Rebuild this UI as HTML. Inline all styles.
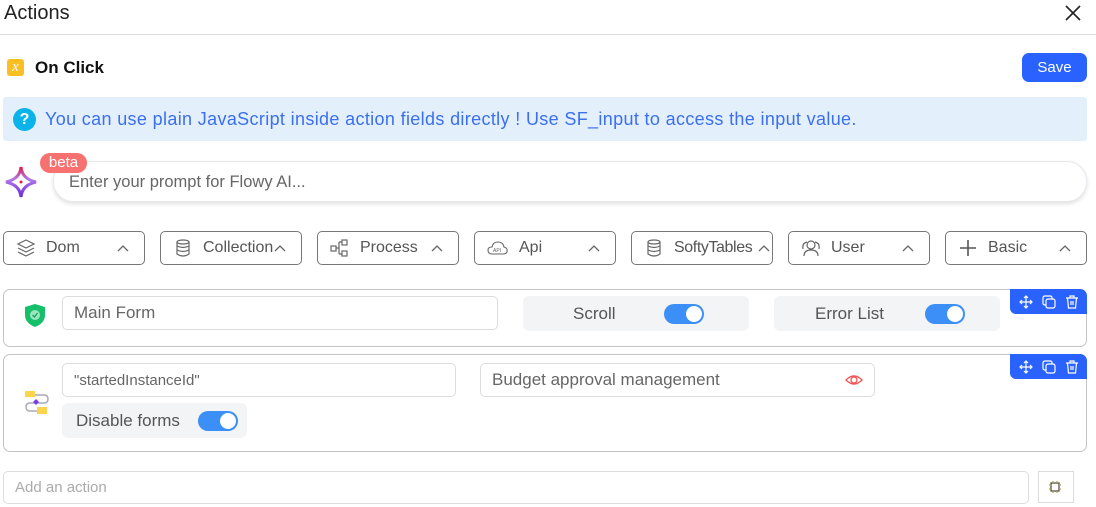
<!DOCTYPE html>
<html><head><meta charset="utf-8"><style>
*{box-sizing:border-box;margin:0;padding:0}
body{width:1096px;height:507px;background:#fff;font-family:"Liberation Sans",sans-serif;position:relative;overflow:hidden;color:#333}
.a{position:absolute}
.btn{position:absolute;top:231px;width:142px;height:34px;border:1px solid #777;border-radius:5px;font-size:16px;color:#555;display:flex;align-items:center;padding-left:12px}
.btn svg.i{margin-right:10px}
.btn .car{position:absolute;right:14px;top:9px}
.card{position:absolute;left:3px;width:1084px;border:1px solid #c4c4c4;border-radius:7px}
.inp{position:absolute;border:1px solid #ddd;border-radius:5px;font-size:17px;color:#666;padding-left:11px;display:flex;align-items:center}
.tg{position:absolute;background:#f3f4f6;border-radius:6px;font-size:17px;color:#555;display:flex;align-items:center}
.sw{width:40px;height:20px;border-radius:10px;background:#3b8ff6;position:absolute}
.sw:after{content:"";position:absolute;right:2px;top:2px;width:16px;height:16px;border-radius:50%;background:#fff}
.tools{position:absolute;right:-1px;top:-1px;width:77px;height:25px;background:#2962ff;border-radius:0 7px 0 6px;display:flex;justify-content:space-around;align-items:center;padding:0 4px}
</style></head><body>
<div class="a" style="left:4px;top:2px;font-size:20px;color:#222">Actions</div>
<svg class="a" style="left:1065px;top:5px" width="16" height="16"><path d="M1 1L15 15M15 1L1 15" stroke="#222" stroke-width="1.6"/></svg>
<div class="a" style="left:0;top:34px;width:1096px;height:1px;background:#ddd"></div>
<div class="a" style="left:7px;top:59px;width:17px;height:17px;background:#fbbf24;border-radius:3px;color:#fff;font-family:'Liberation Serif',serif;font-style:italic;font-size:15px;text-align:center;line-height:16px">x</div>
<div class="a" style="left:35px;top:58px;font-size:17px;font-weight:bold;color:#111">On Click</div>
<div class="a" style="left:1022px;top:53px;width:65px;height:29px;background:#2962ff;border-radius:7px;color:#fff;font-size:15px;text-align:center;line-height:29px">Save</div>
<div class="a" style="left:3px;top:97px;width:1084px;height:44px;background:#e3f0fb;border-radius:3px"></div>
<div class="a" style="left:13px;top:108px;width:23px;height:23px;border-radius:50%;background:#0ab3e8;color:#fff;font-weight:bold;font-size:16px;text-align:center;line-height:23px">?</div>
<div class="a" style="left:45px;top:109px;font-size:18px;letter-spacing:0.35px;color:#3b6ff0">You can use plain JavaScript inside action fields directly ! Use SF_input to access the input value.</div>
<svg class="a" style="left:4px;top:165px" width="34" height="34"><defs><linearGradient id="g" x1="0" y1="0" x2="0" y2="1"><stop offset="0" stop-color="#e11d48"/><stop offset=".4" stop-color="#b07ae8"/><stop offset="1" stop-color="#6d28d9"/></linearGradient></defs><path d="M17 2Q18 14 32 17Q18 20 17 32Q16 20 2 17Q16 14 17 2Z" fill="none" stroke="url(#g)" stroke-width="3"/><circle cx="17" cy="17" r="1.5" fill="#e11d48"/></svg>
<div class="a" style="left:53px;top:161px;width:1034px;height:41px;border-radius:20px;border:1px solid #e5e7eb;box-shadow:0 2px 4px rgba(0,0,0,.12);font-size:16.5px;color:#666;padding:11px 15px">Enter your prompt for Flowy AI...</div>
<div class="a" style="left:40px;top:153px;width:47px;height:20px;background:#f87171;border-radius:10px;color:#fff;font-size:15px;text-align:center;line-height:19px">beta</div>

<div class="btn" style="left:3px"><svg class="i" width="20" height="20" fill="none" stroke="#666" stroke-width="1.2"><path d="M10 2L18 6L10 10L2 6Z M2 10L10 14L18 10 M2 14L10 18L18 14"/></svg>Dom<svg class="car" width="14" height="14"><path d="M2 10L7 5L12 10" fill="none" stroke="#666" stroke-width="1.3"/></svg></div>
<div class="btn" style="left:160px"><svg class="i" width="20" height="20" fill="none" stroke="#666" stroke-width="1.2"><ellipse cx="10" cy="4" rx="6" ry="2"/><path d="M4 4V16Q10 20 16 16V4M4 8Q10 11 16 8M4 12Q10 15 16 12"/></svg>Collection<svg class="car" style="right:14px" width="14" height="14"><path d="M2 10L7 5L12 10" fill="none" stroke="#666" stroke-width="1.3"/></svg></div>
<div class="btn" style="left:317px"><svg class="i" width="20" height="20" fill="none" stroke="#666" stroke-width="1.2"><rect x="1" y="8" width="5" height="5"/><rect x="12" y="2" width="5" height="5"/><rect x="12" y="13" width="5" height="5"/><path d="M6 10H9M9 4V16M9 4H12M9 16H12"/></svg>Process<svg class="car" width="14" height="14"><path d="M2 10L7 5L12 10" fill="none" stroke="#666" stroke-width="1.3"/></svg></div>
<div class="btn" style="left:474px"><svg class="i" width="22" height="20" fill="none" stroke="#666" stroke-width="1.1"><path d="M5 16Q1 16 1 12Q1 9 5 9Q6 4 11 4Q16 4 17 9Q21 10 20 14Q19 16 16 16Z"/><text x="6" y="14" font-size="5" fill="#666" stroke="none">API</text></svg>Api<svg class="car" width="14" height="14"><path d="M2 10L7 5L12 10" fill="none" stroke="#666" stroke-width="1.3"/></svg></div>
<div class="btn" style="left:631px"><svg class="i" width="20" height="20" fill="none" stroke="#666" stroke-width="1.2"><ellipse cx="10" cy="4" rx="6" ry="2"/><path d="M4 4V16Q10 20 16 16V4M4 8Q10 11 16 8M4 12Q10 15 16 12"/></svg><span style="letter-spacing:-0.4px">SoftyTables</span><svg class="car" style="right:1px" width="14" height="14"><path d="M2 10L7 5L12 10" fill="none" stroke="#666" stroke-width="1.3"/></svg></div>
<div class="btn" style="left:788px"><svg class="i" width="20" height="20" fill="none" stroke="#666" stroke-width="1.2"><circle cx="10" cy="7" r="4"/><path d="M3 18Q3 12 10 12Q17 12 17 18M2 11Q1 5 6 4M18 11Q19 5 14 4"/></svg>User<svg class="car" width="14" height="14"><path d="M2 10L7 5L12 10" fill="none" stroke="#666" stroke-width="1.3"/></svg></div>
<div class="btn" style="left:945px"><svg class="i" width="20" height="20" fill="none" stroke="#555" stroke-width="1.6"><path d="M10 2V18M2 10H18"/></svg>Basic<svg class="car" width="14" height="14"><path d="M2 10L7 5L12 10" fill="none" stroke="#666" stroke-width="1.3"/></svg></div>

<div class="card" style="top:289px;height:58px">
<div class="tools"><svg width="14" height="14" fill="none" stroke="#fff" stroke-width="1.2"><path d="M7 1V13M1 7H13M5 3L7 1L9 3M5 11L7 13L9 11M3 5L1 7L3 9M11 5L13 7L11 9"/></svg><svg width="14" height="14" fill="none" stroke="#fff" stroke-width="1.2"><rect x="4" y="4" width="9" height="9" rx="2"/><path d="M4 10H3Q1 10 1 8V3Q1 1 3 1H8Q10 1 10 3V4"/></svg><svg width="14" height="14" fill="none" stroke="#fff" stroke-width="1.2"><path d="M1 3H13M5 3V1H9V3M2.5 3L3.5 13H10.5L11.5 3M6 6V10M8 6V10"/></svg></div>
</div>
<svg class="a" style="left:24px;top:303px" width="22" height="25"><path d="M11 1L21 4V12Q21 20 11 24Q1 20 1 12V4Z" fill="#16c06a"/><circle cx="11" cy="12" r="5" fill="#9ee5bf"/><path d="M8.5 12L10.5 14L13.5 10" stroke="#16a05a" stroke-width="1.3" fill="none"/></svg>
<div class="inp" style="left:62px;top:296px;width:436px;height:34px">Main Form</div>
<div class="tg" style="left:523px;top:296px;width:226px;height:35px"><span style="margin-left:50px">Scroll</span><div class="sw" style="left:141px;top:8px"></div></div>
<div class="tg" style="left:774px;top:296px;width:226px;height:35px"><span style="margin-left:41px">Error List</span><div class="sw" style="left:151px;top:8px"></div></div>

<div class="card" style="top:354px;height:98px">
<div class="tools"><svg width="14" height="14" fill="none" stroke="#fff" stroke-width="1.2"><path d="M7 1V13M1 7H13M5 3L7 1L9 3M5 11L7 13L9 11M3 5L1 7L3 9M11 5L13 7L11 9"/></svg><svg width="14" height="14" fill="none" stroke="#fff" stroke-width="1.2"><rect x="4" y="4" width="9" height="9" rx="2"/><path d="M4 10H3Q1 10 1 8V3Q1 1 3 1H8Q10 1 10 3V4"/></svg><svg width="14" height="14" fill="none" stroke="#fff" stroke-width="1.2"><path d="M1 3H13M5 3V1H9V3M2.5 3L3.5 13H10.5L11.5 3M6 6V10M8 6V10"/></svg></div>
</div>
<svg class="a" style="left:24px;top:390px" width="25" height="25"><path d="M8 5H20Q24 5 24 9Q24 13 20 13H6Q2 13 2 17Q2 21 6 21H14" fill="none" stroke="#aab" stroke-width="1.5"/><rect x="1" y="1" width="10" height="6" fill="#fbd34d"/><rect x="13" y="17" width="10" height="7" fill="#fbd34d"/><path d="M12 9L15 12L12 15L9 12Z" fill="#7c3aed"/></svg>
<div class="inp" style="left:62px;top:363px;width:394px;height:34px;font-size:15px">"startedInstanceId"</div>
<div class="inp" style="left:480px;top:363px;width:395px;height:34px">Budget approval management
<svg class="a" style="left:364px;top:10px" width="18" height="12" fill="none" stroke="#f05555" stroke-width="1.3"><path d="M1 6Q9 -2 17 6Q9 14 1 6Z"/><circle cx="9" cy="6" r="3"/></svg></div>
<div class="tg" style="left:62px;top:403px;width:185px;height:35px"><span style="margin-left:14px">Disable forms</span><div class="sw" style="left:136px;top:8px"></div></div>

<div class="inp" style="left:3px;top:471px;width:1026px;height:33px;font-size:15px;color:#aaa;border-color:#ddd">Add an action</div>
<div class="a" style="left:1038px;top:471px;width:36px;height:32px;border:1px solid #ddd"></div>
<svg class="a" style="left:1048px;top:480px" width="14" height="14" fill="none" stroke="#444" stroke-width="1.2"><rect x="3" y="3" width="8" height="8"/><path d="M5 1V3M9 1V3M5 11V13M9 11V13M1 5H3M1 9H3M11 5H13M11 9H13" stroke="#b8a040"/></svg>
</body></html>
